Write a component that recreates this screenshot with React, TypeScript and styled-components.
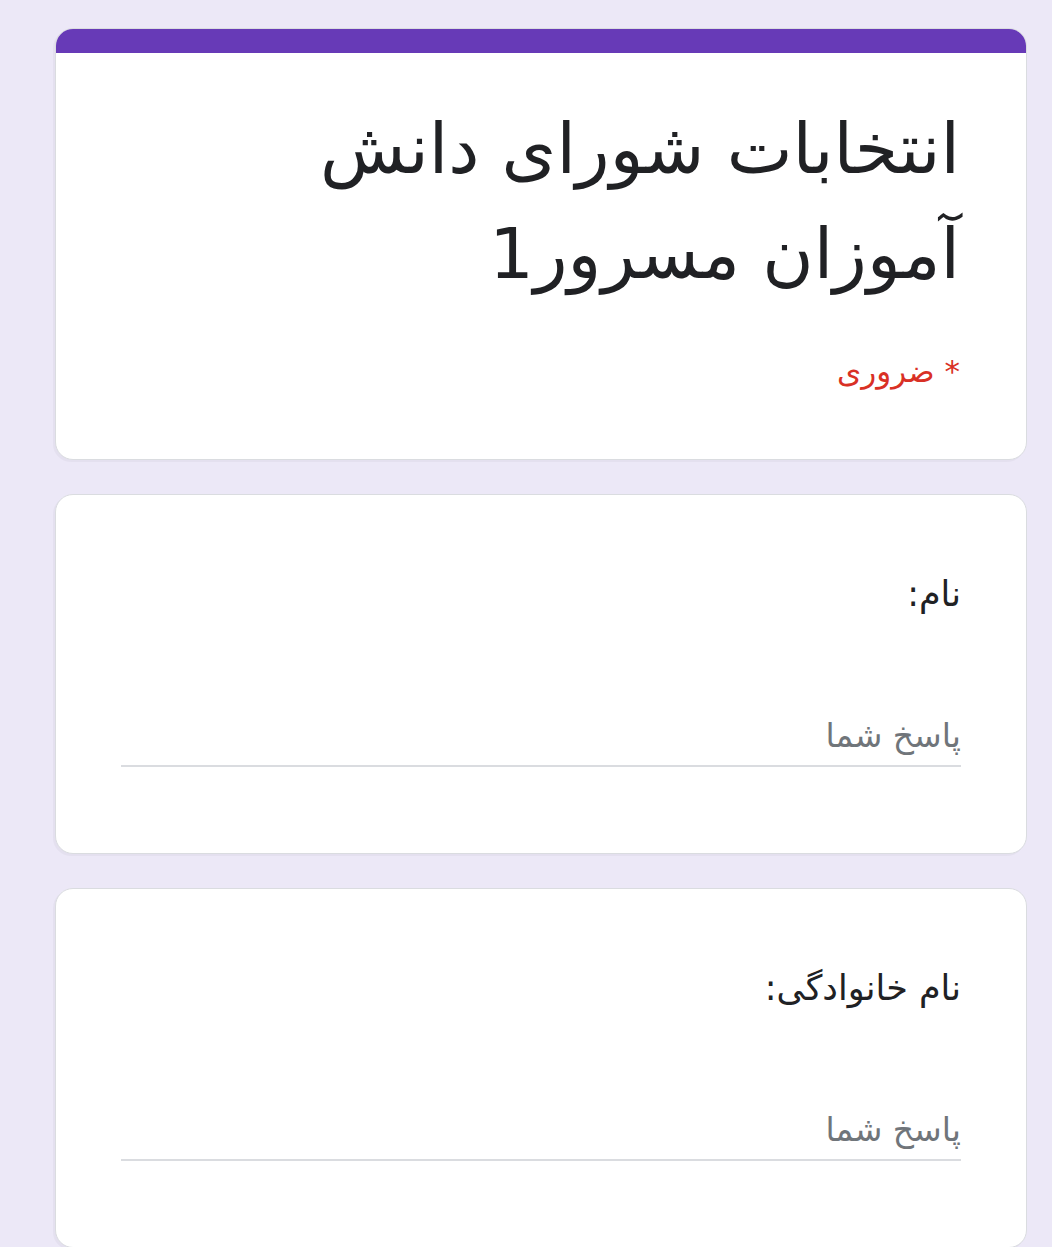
import styled, { createGlobalStyle } from 'styled-components';

const GlobalStyle = createGlobalStyle`
  html, body {
    margin: 0;
    padding: 0;
    background: #ece8f7;
  }
  body {
    font-family: "DejaVu Sans", "Noto Sans", sans-serif;
  }
`;

const Page = styled.div`
  direction: rtl;
  display: flex;
  flex-direction: column;
  gap: 34px;
  padding: 28px 25px 40px 55px;
`;

const Card = styled.section`
  background: #fff;
  border: 1.5px solid #dadce0;
  border-radius: 18px;
  overflow: hidden;
  box-shadow: -2px 2px 0 rgba(0, 0, 0, 0.03);
`;

const AccentBar = styled.div`
  height: 24px;
  background: #673ab7;
`;

const HeaderBody = styled.div`
  padding: 44px 66px 66px 66px;
`;

const Title = styled.h1`
  margin: 0;
  font-size: 70px;
  font-weight: normal;
  line-height: 105px;
  color: #202124;
`;

const Required = styled.div`
  margin-top: 42px;
  font-size: 31px;
  line-height: 44px;
  color: #d93025;
`;

const QuestionBody = styled.div`
  padding: 76px 65px 86px 65px;
`;

const Label = styled.div`
  font-size: 35px;
  line-height: 46px;
  color: #202124;
`;

const Input = styled.div`
  margin-top: 96px;
  border-bottom: 2px solid #dadce0;
  padding-bottom: 6px;
  font-size: 33px;
  line-height: 46px;
  color: #70757a;
`;

const Question = ({ label }: { label: string }) => (
  <Card>
    <QuestionBody>
      <Label>{label}</Label>
      <Input>پاسخ شما</Input>
    </QuestionBody>
  </Card>
);

export default function App() {
  return (
    <>
      <GlobalStyle />
      <Page>
        <Card>
          <AccentBar />
          <HeaderBody>
            <Title>
              انتخابات شورای دانش
              <br />
              آموزان مسرور1
            </Title>
            <Required>* ضروری</Required>
          </HeaderBody>
        </Card>
        <Question label="نام:" />
        <Question label="نام خانوادگی:" />
      </Page>
    </>
  );
}
